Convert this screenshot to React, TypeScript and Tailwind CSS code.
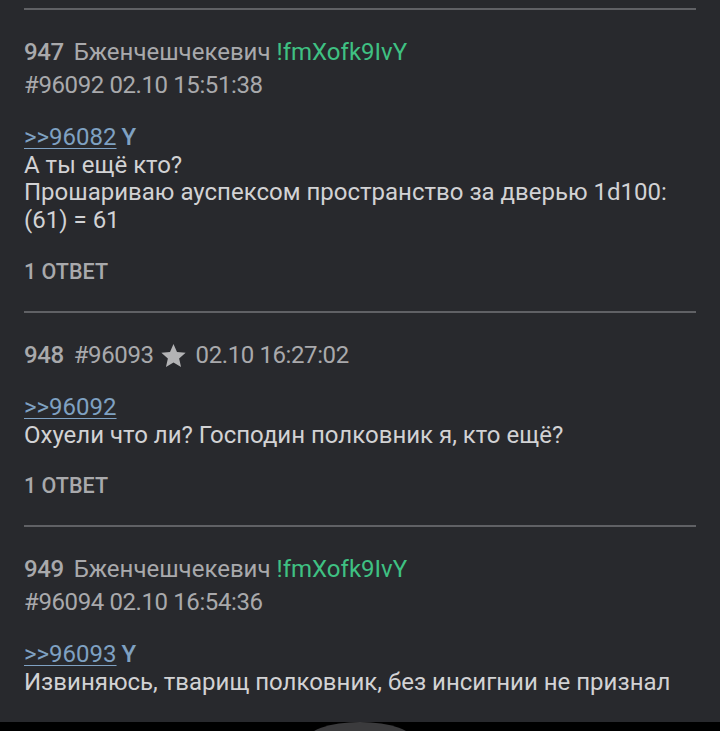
import React from "react";

type Post = {
    num: number;
    name?: string;
    trip?: string;
    id: string;
    date: string;
    star?: boolean;
    reply: string;
    replyMark?: boolean;
    lines: string[];
    answers?: string;
};

const posts: Post[] = [
    {
        num: 947,
        name: "Бженчешчекевич",
        trip: "!fmXofk9IvY",
        id: "#96092",
        date: "02.10 15:51:38",
        reply: ">>96082",
        replyMark: true,
        lines: ["А ты ещё кто?", "Прошариваю ауспексом пространство за дверью 1d100:", "(61) = 61"],
        answers: "1 ОТВЕТ",
    },
    {
        num: 948,
        id: "#96093",
        date: "02.10 16:27:02",
        star: true,
        reply: ">>96092",
        lines: ["Охуели что ли? Господин полковник я, кто ещё?"],
        answers: "1 ОТВЕТ",
    },
    {
        num: 949,
        name: "Бженчешчекевич",
        trip: "!fmXofk9IvY",
        id: "#96094",
        date: "02.10 16:54:36",
        reply: ">>96093",
        replyMark: true,
        lines: ["Извиняюсь, тварищ полковник, без инсигнии не признал"],
    },
];

function StarIcon() {
    return (
        <svg width="27" height="27" viewBox="0 0 24 24" className="ml-[6px] mr-[9px] inline-block">
            <path
                d="M12 1.8l3.1 7.1 7.7.7-5.8 5.1 1.7 7.6L12 18.3l-6.7 4 1.7-7.6-5.8-5.1 7.7-.7z"
                fill="#b3b3b5"
            />
        </svg>
    );
}

function PostItem({ post }: { post: Post }) {
    return (
        <div className="border-t-2 border-[#606165] pt-[26px] pb-[25px]">
            {post.name ? (
                <div className="text-[24px] leading-[33px] text-[#a9a9ac]">
                    <div>
                        <span className="mr-[10px] font-medium tracking-[-0.4px]">{post.num}</span>
                        {post.name} <span className="text-[#3fc183]">{post.trip}</span>
                    </div>
                    <div className="tracking-[-0.4px]">
                        {post.id} {post.date}
                    </div>
                </div>
            ) : (
                <div className="flex items-center text-[24px] leading-[33px] tracking-[-0.4px] text-[#a9a9ac]">
                    <span className="font-medium">{post.num}</span>
                    <span className="ml-[10px]">{post.id}</span>
                    {post.star && <StarIcon />}
                    <span>{post.date}</span>
                </div>
            )}

            <div className="mt-[22px] text-[24px] leading-[27.7px] text-[#d2d2d4]">
                <div>
                    <span className="text-[#7fa1c2] underline decoration-1 underline-offset-[3px]">{post.reply}</span>
                    {post.replyMark && <span className="ml-[5px] font-medium text-[#7fa1c2]">Y</span>}
                </div>
                {post.lines.map((line) => (
                    <div key={line}>{line}</div>
                ))}
            </div>

            {post.answers && (
                <div className="mt-[23px] text-[21.5px] font-medium leading-[28px] text-[#a9a9ac]">
                    {post.answers}
                </div>
            )}
        </div>
    );
}

export default function App() {
    return (
        <div className="flex h-[731px] w-[720px] flex-col overflow-hidden bg-[#28292d] font-['Roboto',sans-serif]">
            <div className="flex-1 overflow-hidden px-6 pt-2">
                {posts.map((post) => (
                    <PostItem key={post.num} post={post} />
                ))}
            </div>
            <div className="flex h-[9px] justify-center overflow-hidden bg-black">
                <div className="h-[40px] w-[110px] rounded-[50%] bg-[#3b3b3d]" />
            </div>
        </div>
    );
}
